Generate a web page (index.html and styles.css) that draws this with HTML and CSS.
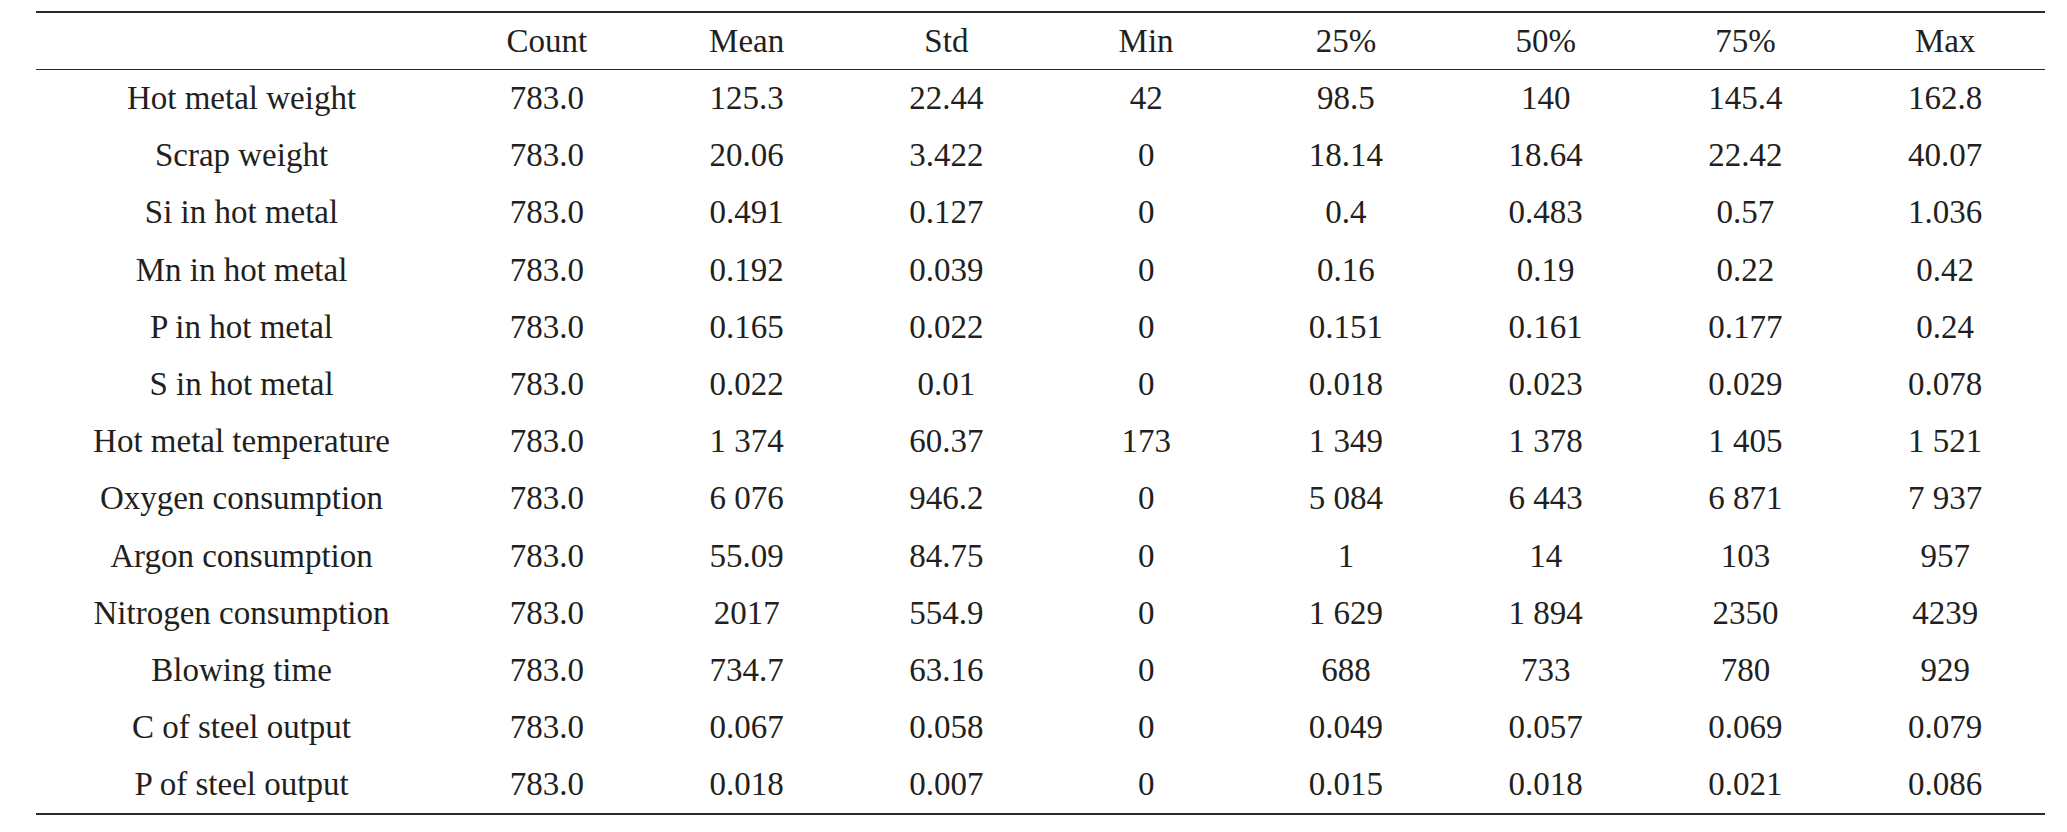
FILE: index.html
```html
<!DOCTYPE html>
<html>
<head>
<meta charset="utf-8">
<link rel="stylesheet" href="styles.css">
</head>
<body>
<table class="stats">
  <thead>
    <tr><th class="label"></th><th>Count</th><th>Mean</th><th>Std</th><th>Min</th><th>25%</th><th>50%</th><th>75%</th><th>Max</th></tr>
  </thead>
  <tbody>
    <tr><td class="label">Hot metal weight</td><td>783.0</td><td>125.3</td><td>22.44</td><td>42</td><td>98.5</td><td>140</td><td>145.4</td><td>162.8</td></tr>
    <tr><td class="label">Scrap weight</td><td>783.0</td><td>20.06</td><td>3.422</td><td>0</td><td>18.14</td><td>18.64</td><td>22.42</td><td>40.07</td></tr>
    <tr><td class="label">Si in hot metal</td><td>783.0</td><td>0.491</td><td>0.127</td><td>0</td><td>0.4</td><td>0.483</td><td>0.57</td><td>1.036</td></tr>
    <tr><td class="label">Mn in hot metal</td><td>783.0</td><td>0.192</td><td>0.039</td><td>0</td><td>0.16</td><td>0.19</td><td>0.22</td><td>0.42</td></tr>
    <tr><td class="label">P in hot metal</td><td>783.0</td><td>0.165</td><td>0.022</td><td>0</td><td>0.151</td><td>0.161</td><td>0.177</td><td>0.24</td></tr>
    <tr><td class="label">S in hot metal</td><td>783.0</td><td>0.022</td><td>0.01</td><td>0</td><td>0.018</td><td>0.023</td><td>0.029</td><td>0.078</td></tr>
    <tr><td class="label">Hot metal temperature</td><td>783.0</td><td>1 374</td><td>60.37</td><td>173</td><td>1 349</td><td>1 378</td><td>1 405</td><td>1 521</td></tr>
    <tr><td class="label">Oxygen consumption</td><td>783.0</td><td>6 076</td><td>946.2</td><td>0</td><td>5 084</td><td>6 443</td><td>6 871</td><td>7 937</td></tr>
    <tr><td class="label">Argon consumption</td><td>783.0</td><td>55.09</td><td>84.75</td><td>0</td><td>1</td><td>14</td><td>103</td><td>957</td></tr>
    <tr><td class="label">Nitrogen consumption</td><td>783.0</td><td>2017</td><td>554.9</td><td>0</td><td>1 629</td><td>1 894</td><td>2350</td><td>4239</td></tr>
    <tr><td class="label">Blowing time</td><td>783.0</td><td>734.7</td><td>63.16</td><td>0</td><td>688</td><td>733</td><td>780</td><td>929</td></tr>
    <tr><td class="label">C of steel output</td><td>783.0</td><td>0.067</td><td>0.058</td><td>0</td><td>0.049</td><td>0.057</td><td>0.069</td><td>0.079</td></tr>
    <tr><td class="label">P of steel output</td><td>783.0</td><td>0.018</td><td>0.007</td><td>0</td><td>0.015</td><td>0.018</td><td>0.021</td><td>0.086</td></tr>
  </tbody>
</table>
</body>
</html>
```
FILE: styles.css
```css
html, body {
  margin: 0;
  padding: 0;
  background: #ffffff;
}
body {
  padding: 11px 0 0 36px;
  font-family: "Liberation Serif", "Times New Roman", serif;
  color: #231f20;
}
.stats {
  border-collapse: collapse;
  width: 2009px;
  table-layout: fixed;
  font-size: 33px;
  border-top: 2px solid #2a2a2a;
  border-bottom: 2px solid #2a2a2a;
}
.stats th,
.stats td {
  padding: 0;
  text-align: center;
  vertical-align: middle;
  font-weight: normal;
  white-space: nowrap;
  width: 199.75px;
}
.stats th.label,
.stats td.label {
  width: 411px;
}
.stats thead th {
  height: 56px;
  border-bottom: 1.5px solid #2a2a2a;
}
.stats tbody td {
  height: 57.2px;
}
```
